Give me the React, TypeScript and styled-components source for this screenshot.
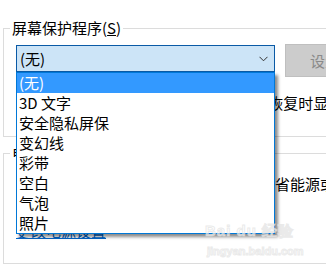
import React from "react";
import styled, { createGlobalStyle } from "styled-components";

const Global = createGlobalStyle`
  html, body { margin: 0; padding: 0; background: #fff; }
  body { font-family: "Noto Sans CJK SC", "Noto Sans", sans-serif; color: #000; }
`;

const Page = styled.div`
  position: relative;
  width: 326px;
  height: 269px;
  overflow: hidden;
  box-sizing: border-box;
  padding: 18px 0 0 3px;
  background: #fff;
  font-size: 15px;
`;

const Group = styled.fieldset<{ $top?: number }>`
  margin: ${(p) => p.$top ?? 0}px 0 0 0;
  padding: ${(p) => (p.$top ? 11 : 7)}px 0 22px 12px;
  border: 1px solid #dcdcdc;
  border-right: none;
  width: 420px;
  min-width: 0;
  box-sizing: border-box;
`;

const Legend = styled.legend`
  margin-left: -6px;
  padding: 0 2px;
  font-size: 15px;
  line-height: 20px;
  color: #000;
`;

const ComboRow = styled.div`
  display: flex;
  align-items: flex-start;
  gap: 10px;
  height: 32px;
`;

const Combo = styled.div`
  box-sizing: border-box;
  width: 259px;
  height: 27px;
  border: 1px solid #0a5aa6;
  background: #cce4f7;
  display: flex;
  align-items: center;
  justify-content: space-between;
  padding: 0 6px 0 3px;
  font-size: 15px;
  line-height: 25px;
`;

const Button = styled.div`
  box-sizing: border-box;
  margin-top: -1px;
  height: 33px;
  width: 90px;
  background: #cccccc;
  border: 1px solid #bfbfbf;
  color: #8a8a8a;
  font-size: 15px;
  line-height: 31px;
  padding-left: 24px;
  white-space: nowrap;
`;

const WaitRow = styled.div`
  margin-top: 15px;
  height: 22px;
  display: flex;
  align-items: center;
  line-height: 22px;
  white-space: nowrap;
`;

const WaitGroup = styled.div`
  width: 226px;
  display: flex;
  align-items: center;
  gap: 6px;
`;

const Spin = styled.div`
  box-sizing: border-box;
  width: 50px;
  height: 22px;
  border: 1px solid #7a7a7a;
  padding-left: 4px;
  line-height: 20px;
`;

const Check = styled.div`
  box-sizing: border-box;
  width: 13px;
  height: 13px;
  border: 1px solid #333;
  margin-right: 5px;
`;

const Desc = styled.div`
  margin-left: 4px;
  height: 20px;
  line-height: 20px;
  white-space: nowrap;
`;

const Link = styled.a`
  display: inline-block;
  margin-top: 27px;
  height: 20px;
  line-height: 20px;
  color: #0066cc;
  text-decoration: underline;
`;

const List = styled.div`
  position: absolute;
  left: 16px;
  top: 72px;
  width: 259px;
  box-sizing: border-box;
  border: 1px solid #0078d7;
  background: #fff;
  box-shadow: 3px 3px 3px rgba(0, 0, 0, 0.45);
`;

const Item = styled.div<{ $sel?: boolean }>`
  height: 20px;
  line-height: 20px;
  padding-left: 2px;
  font-size: 15px;
  background: ${(p) => (p.$sel ? "#3399ff" : "#fff")};
  color: ${(p) => (p.$sel ? "#fff" : "#000")};
  white-space: nowrap;
`;

const Watermark = styled.div`
  position: absolute;
  left: 205px;
  top: 222px;
  color: rgba(255, 255, 255, 0.6);
  -webkit-text-stroke: 1px rgba(220, 220, 220, 0.6);
  font-family: "Liberation Sans", Arial, sans-serif;
  pointer-events: none;
`;

const WmTop = styled.div`
  font-size: 15px;
  font-weight: bold;
  line-height: 18px;
  letter-spacing: 1px;
`;

const WmBottom = styled.div`
  font-size: 11px;
  font-weight: bold;
  line-height: 14px;
  margin-top: 4px;
  margin-left: 2px;
`;

const items = ["(无)", "3D 文字", "安全隐私屏保", "变幻线", "彩带", "空白", "气泡", "照片"];

export default function App() {
  return (
    <>
      <Global />
      <Page>
        <Group>
          <Legend>
            屏幕保护程序(<u>S</u>)
          </Legend>
          <ComboRow>
            <Combo>
              <span>(无)</span>
              <svg width="9" height="6" viewBox="0 0 9 6">
                <path d="M0.5 0.8 L4.5 4.8 L8.5 0.8" fill="none" stroke="#333" strokeWidth="1" />
              </svg>
            </Combo>
            <Button>设置(T)...</Button>
          </ComboRow>
          <WaitRow>
            <WaitGroup>
              <span>等待(W):</span>
              <Spin>1</Spin>
              <span>分钟</span>
            </WaitGroup>
            <Check />
            <span>在恢复时显示登录屏幕(R)</span>
          </WaitRow>
        </Group>
        <Group $top={6}>
          <Legend>电源管理</Legend>
          <Desc>通过调整显示亮度和其他电源设置以节省能源或提供最佳性能。</Desc>
          <Link>更改电源设置</Link>
        </Group>
        <List>
          {items.map((t, i) => (
            <Item key={t} $sel={i === 0}>
              {t}
            </Item>
          ))}
        </List>
        <Watermark>
          <WmTop>Bai du 经验</WmTop>
          <WmBottom>jingyan.baidu.com</WmBottom>
        </Watermark>
      </Page>
    </>
  );
}
